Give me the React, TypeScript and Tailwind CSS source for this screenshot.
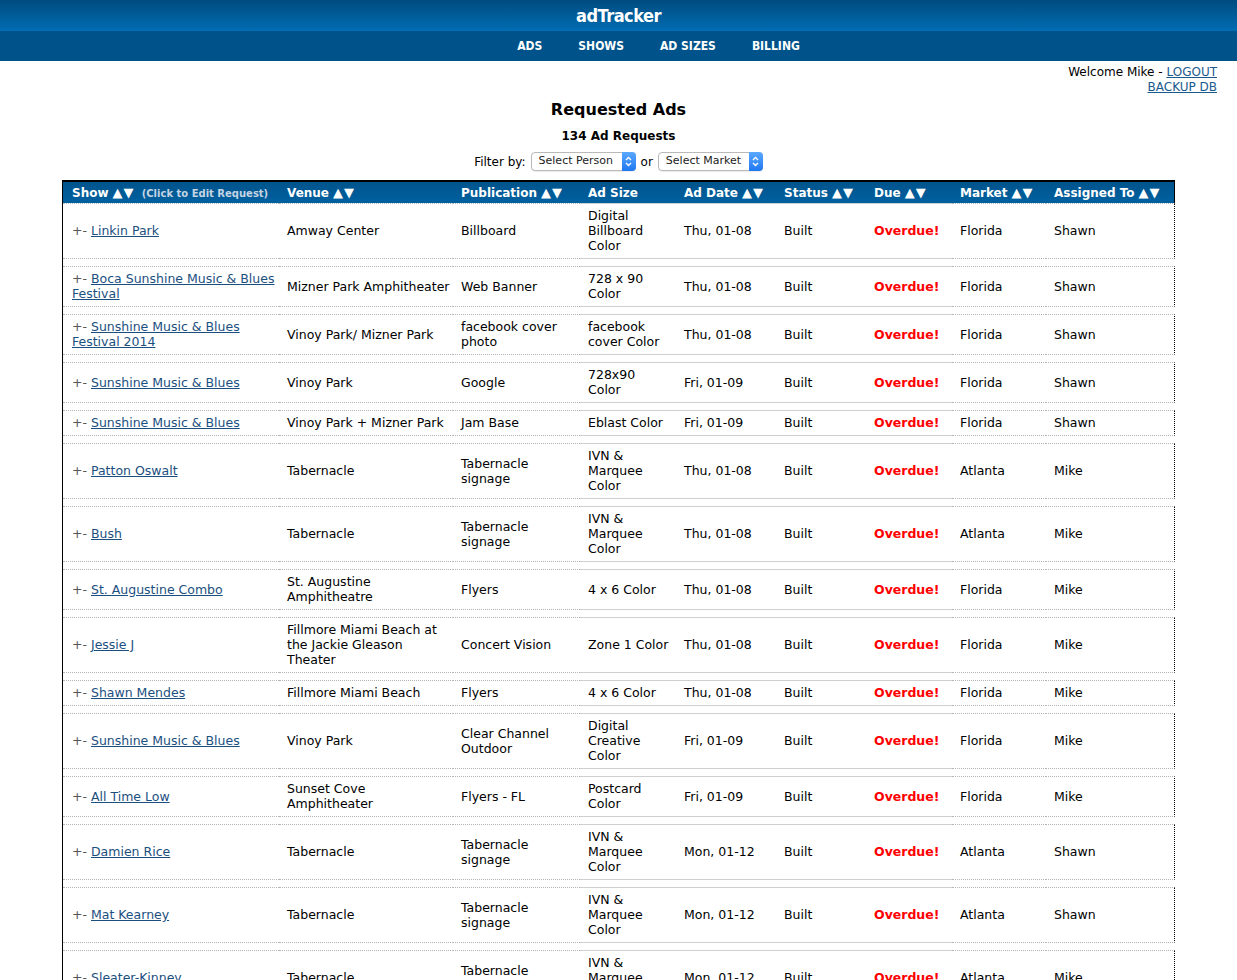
const font = { fontFamily: '"DejaVu Sans", Verdana, sans-serif' }

type Row = {
  show: string
  venue: string
  pub: string
  size: string
  date: string
  market: string
  who: string
}

const rows: Row[] = [
  { show: 'Linkin Park', venue: 'Amway Center', pub: 'Billboard', size: 'Digital\nBillboard\nColor', date: 'Thu, 01-08', market: 'Florida', who: 'Shawn' },
  { show: 'Boca Sunshine Music & Blues\nFestival', venue: 'Mizner Park Amphitheater', pub: 'Web Banner', size: '728 x 90\nColor', date: 'Thu, 01-08', market: 'Florida', who: 'Shawn' },
  { show: 'Sunshine Music & Blues\nFestival 2014', venue: 'Vinoy Park/ Mizner Park', pub: 'facebook cover\nphoto', size: 'facebook\ncover Color', date: 'Thu, 01-08', market: 'Florida', who: 'Shawn' },
  { show: 'Sunshine Music & Blues', venue: 'Vinoy Park', pub: 'Google', size: '728x90\nColor', date: 'Fri, 01-09', market: 'Florida', who: 'Shawn' },
  { show: 'Sunshine Music & Blues', venue: 'Vinoy Park + Mizner Park', pub: 'Jam Base', size: 'Eblast Color', date: 'Fri, 01-09', market: 'Florida', who: 'Shawn' },
  { show: 'Patton Oswalt', venue: 'Tabernacle', pub: 'Tabernacle\nsignage', size: 'IVN &\nMarquee\nColor', date: 'Thu, 01-08', market: 'Atlanta', who: 'Mike' },
  { show: 'Bush', venue: 'Tabernacle', pub: 'Tabernacle\nsignage', size: 'IVN &\nMarquee\nColor', date: 'Thu, 01-08', market: 'Atlanta', who: 'Mike' },
  { show: 'St. Augustine Combo', venue: 'St. Augustine\nAmphitheatre', pub: 'Flyers', size: '4 x 6 Color', date: 'Thu, 01-08', market: 'Florida', who: 'Mike' },
  { show: 'Jessie J', venue: 'Fillmore Miami Beach at\nthe Jackie Gleason\nTheater', pub: 'Concert Vision', size: 'Zone 1 Color', date: 'Thu, 01-08', market: 'Florida', who: 'Mike' },
  { show: 'Shawn Mendes', venue: 'Fillmore Miami Beach', pub: 'Flyers', size: '4 x 6 Color', date: 'Thu, 01-08', market: 'Florida', who: 'Mike' },
  { show: 'Sunshine Music & Blues', venue: 'Vinoy Park', pub: 'Clear Channel\nOutdoor', size: 'Digital\nCreative\nColor', date: 'Fri, 01-09', market: 'Florida', who: 'Mike' },
  { show: 'All Time Low', venue: 'Sunset Cove\nAmphitheater', pub: 'Flyers - FL', size: 'Postcard\nColor', date: 'Fri, 01-09', market: 'Florida', who: 'Mike' },
  { show: 'Damien Rice', venue: 'Tabernacle', pub: 'Tabernacle\nsignage', size: 'IVN &\nMarquee\nColor', date: 'Mon, 01-12', market: 'Atlanta', who: 'Shawn' },
  { show: 'Mat Kearney', venue: 'Tabernacle', pub: 'Tabernacle\nsignage', size: 'IVN &\nMarquee\nColor', date: 'Mon, 01-12', market: 'Atlanta', who: 'Shawn' },
  { show: 'Sleater-Kinney', venue: 'Tabernacle', pub: 'Tabernacle\nsignage', size: 'IVN &\nMarquee\nColor', date: 'Mon, 01-12', market: 'Atlanta', who: 'Mike' },
]

const dotted = 'border-y border-dotted border-[#b4b4b4]'
const solid = 'border-y border-solid border-[#cfcfcf]'
const cell = 'px-2 pt-[4px] pb-[5px] align-middle whitespace-pre overflow-visible'

function Arrows() {
  return <span className="ml-[4px] text-[13px] tracking-[1px]">▲▼</span>
}

function Select({ label, w }: { label: string; w: string }) {
  return (
    <div className={`flex h-[19px] ${w} items-center rounded-[4px] border border-[#b9b9b9] bg-white shadow-[0_1px_1px_rgba(0,0,0,0.08)]`}>
      <span className="flex-1 pl-[7px] text-[11px] text-[#222]">{label}</span>
      <span className="-mr-px flex h-[19px] w-[14px] items-center justify-center rounded-r-[4px] bg-gradient-to-b from-[#5aa8ff] to-[#1e78f0]">
        <svg width="7" height="11" viewBox="0 0 7 11">
          <path d="M1 4 L3.5 1.5 L6 4 M1 7 L3.5 9.5 L6 7" fill="none" stroke="white" strokeWidth="1.3" />
        </svg>
      </span>
    </div>
  )
}

export default function App() {
  return (
    <div className="min-h-[980px] bg-white text-[13px] text-black" style={font}>
      <header>
        <div className="flex h-[31px] items-center justify-center bg-gradient-to-b from-[#004c80] to-[#006db3]">
          <span className="text-[18px] font-bold tracking-[-0.5px] text-white" style={{ fontFamily: '"DejaVu Sans Condensed", "DejaVu Sans", sans-serif' }}>
            adTracker
          </span>
        </div>
        <nav className="flex h-[30px] items-center justify-center gap-[36px] bg-[#00538a] pl-[80px] text-[12px] font-bold text-white" style={{ fontFamily: '"DejaVu Sans Condensed", "DejaVu Sans", sans-serif' }}>
          <a>ADS</a>
          <a>SHOWS</a>
          <a>AD SIZES</a>
          <a>BILLING</a>
        </nav>
      </header>

      <div className="mt-[4px] pr-[20px] text-right text-[12px] leading-[15px]">
        <div>
          Welcome Mike - <a className="text-[#1b5a8e] underline">LOGOUT</a>
        </div>
        <div>
          <a className="text-[#1b5a8e] underline">BACKUP DB</a>
        </div>
      </div>

      <h1 className="mt-[4px] text-center text-[16px] font-bold leading-[22px]">Requested Ads</h1>
      <div className="mt-[8px] text-center text-[12px] font-bold leading-[15px]">134 Ad Requests</div>
      <div className="mt-[8px] flex items-center justify-center gap-[5px] text-[12px]">
        <span>Filter by:</span>
        <Select label="Select Person" w="w-[105px]" />
        <span>or</span>
        <Select label="Select Market" w="w-[105px]" />
      </div>

      <table className="mx-auto mt-[9px] w-[1112px] table-fixed border-separate border-spacing-0 border-l border-black text-[12.5px]">
        <colgroup>
          <col className="w-[216px]" />
          <col className="w-[174px]" />
          <col className="w-[127px]" />
          <col className="w-[96px]" />
          <col className="w-[100px]" />
          <col className="w-[90px]" />
          <col className="w-[86px]" />
          <col className="w-[94px]" />
          <col className="w-[129px]" />
        </colgroup>
        <thead>
          <tr className="h-[23px] bg-gradient-to-b from-[#00528a] to-[#0061a0] text-left text-[12px] font-bold text-white">
            <th className="border-t-2 border-black pl-[9px] pt-[1px] whitespace-nowrap">
              Show<Arrows /> <span className="ml-[3px] text-[10px] text-[#c5d4e3]">(Click to Edit Request)</span>
            </th>
            <th className="border-t-2 border-black pl-2 pt-[1px]">Venue<Arrows /></th>
            <th className="border-t-2 border-black pl-2 pt-[1px]">Publication<Arrows /></th>
            <th className="border-t-2 border-black pl-2 pt-[1px]">Ad Size</th>
            <th className="border-t-2 border-black pl-2 pt-[1px]">Ad Date<Arrows /></th>
            <th className="border-t-2 border-black pl-2 pt-[1px]">Status<Arrows /></th>
            <th className="border-t-2 border-black pl-2 pt-[1px]">Due<Arrows /></th>
            <th className="border-t-2 border-black pl-2 pt-[1px]">Market<Arrows /></th>
            <th className="border-t-2 border-r border-black pl-2 pt-[1px] whitespace-nowrap">Assigned To<Arrows /></th>
          </tr>
        </thead>
        <tbody className="leading-[15px]">
          {rows.map((r, i) => (
            <RowView key={i} r={r} first={i === 0} />
          ))}
        </tbody>
      </table>
    </div>
  )
}

function RowView({ r, first }: { r: Row; first: boolean }) {
  return (
    <>
      {!first && (
        <tr>
          <td colSpan={9} className="h-[7px] p-0" />
        </tr>
      )}
      <tr>
        <td className={`${cell} ${dotted} pl-[9px]`}>
          <span className="text-[#555]">+- </span>
          <a className="text-[#1b4f80] underline">{r.show}</a>
        </td>
        <td className={`${cell} ${dotted}`}>{r.venue}</td>
        <td className={`${cell} ${dotted}`}>{r.pub}</td>
        <td className={`${cell} ${solid}`}>{r.size}</td>
        <td className={`${cell} ${solid}`}>{r.date}</td>
        <td className={`${cell} ${solid}`}>Built</td>
        <td className={`${cell} ${solid} font-bold text-[#ff0000]`}>Overdue!</td>
        <td className={`${cell} ${dotted}`}>{r.market}</td>
        <td className={`${cell} ${dotted} border-r border-r-black`}>{r.who}</td>
      </tr>
    </>
  )
}
